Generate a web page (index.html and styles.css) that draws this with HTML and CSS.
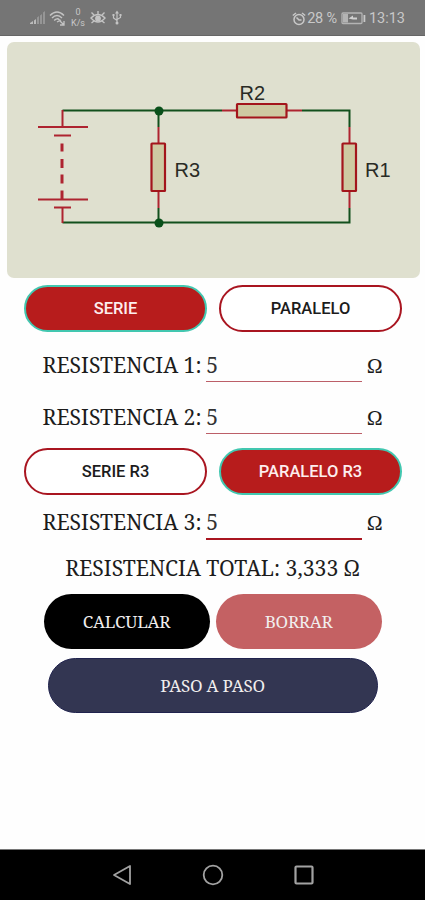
FILE: index.html
```html
<!DOCTYPE html>
<html lang="es">

<head>
    <meta charset="UTF-8">
    <meta name="viewport" content="width=device-width, initial-scale=1.0">
    <title>Resistencia total</title>
    <link rel="stylesheet" href="styles.css">
</head>

<body>
    <header class="status-bar">
        <div class="status-left">
            <svg class="icon-signal" width="16" height="14" viewBox="0 0 16 14">
                <path d="M0 13h3v-3l-3 2zM4 13h2V8L4 9.500z" fill="#bbb" />
                <path d="M7 13h2V5L7 6.500zM10 13h2V3l-2 1.500zM13 13h2V0l-2 1.500z" fill="#969696" />
            </svg>
            <svg width="17" height="16" viewBox="0 0 17 16" fill="none" stroke="#c4c4c4" stroke-width="1.500">
                <path d="M1 5.500Q8 -1.500 15 5.500M3 8Q8 3 13 8M5.200 10.500Q8 7.500 10.500 10" />
                <path d="M8 12l4-2M11 11l4 4M15 11v4h-4" stroke-width="1.300" />
            </svg>
            <div class="net-speed"><span>0</span><span>K/s</span></div>
            <svg width="16" height="14" viewBox="0 0 16 14" fill="none" stroke="#c4c4c4" stroke-width="1.400">
                <path d="M1 7Q8 0 15 7Q8 15 1 7zM1.500 1.500L4 4M8 0v3M14.500 1.500L12 4M1.500 12L4 10M14.500 12L12 10" />
                <circle cx="8" cy="7.500" r="2.200" fill="#c4c4c4" />
            </svg>
            <svg class="icon-usb" width="10" height="15" viewBox="0 0 10 15" fill="none" stroke="#c4c4c4" stroke-width="1.200">
                <path d="M5 2v11M1.500 5v3L5 10.500M8.500 5v2.500L5 9.500" />
                <path d="M3 3.500L5 .5l2 3zM.5 4h2v2h-2zM7.500 4h2v2h-2z" fill="#c4c4c4" stroke="none" />
                <circle cx="5" cy="13" r="1.500" fill="#c4c4c4" stroke="none" />
            </svg>
        </div>
        <div class="status-right">
            <svg width="14" height="14" viewBox="0 0 14 14" fill="none" stroke="#c8c8c8" stroke-width="1.500">
                <circle cx="7" cy="7.500" r="5" />
                <path d="M.8 3.500L4 1M10 1l3.200 2.500M4.500 5.500L7 8h2.500" />
            </svg>
            <span class="percent">28 %</span>
            <svg class="icon-battery" width="25" height="13" viewBox="0 0 25 13">
                <rect x="1" y="1" width="20" height="10.500" rx="1" fill="none" stroke="#b4b4b4" stroke-width="1.300" />
                <path d="M2 2h5v8.500H2z" fill="#b4b4b4" />
                <path d="M7.500 6.500L12 3.500v2h4v2h-4z" fill="#d0d0d0" />
                <path d="M22.500 3h1.800v7h-1.800z" fill="#c8c8c8" />
            </svg>
            <span>13:13</span>
        </div>
    </header>

    <main class="content">
        <div class="circuit">
            <svg width="413" height="236" viewBox="7 42 413 236" fill="none" stroke-width="2">
                <g class="wire">
                    <path d="M62.500 110.500H222M302 110.500H349.500V127M349.500 208V222.500H62.500M158.500 110V127M158.500 208V222" />
                </g>
                <g class="lead">
                    <path d="M222 110.500H237M287 110.500H302M349.500 127V143M349.500 191V208M158.500 127V143M158.500 191V208" />
                    <path d="M62.500 110V127M38 127H88M54 135.500H71M38 199.500H88M54 207.500H71M62.500 208V223" />
                    <path d="M62 143.500v8M62 159v9M62 174.500v9M62 190.500v9" stroke-width="3" />
                </g>
                <g class="resistor">
                    <rect x="237" y="104" width="49.500" height="13.500" rx=".5" />
                    <rect x="151.500" y="143.500" width="13.500" height="47.500" rx=".5" />
                    <rect x="342.500" y="143.500" width="13.500" height="47.500" rx=".5" />
                </g>
                <circle class="node" cx="159" cy="111" r="4.500" />
                <circle class="node" cx="159" cy="223" r="4.500" />
                <g class="labels">
                    <text x="239.500" y="100">R2</text>
                    <text x="174.500" y="177">R3</text>
                    <text x="365" y="177">R1</text>
                </g>
            </svg>
        </div>

        <div class="toggle-row">
            <button class="toggle active">SERIE</button>
            <button class="toggle">PARALELO</button>
        </div>

        <div class="field field-1">
            <label>RESISTENCIA 1:</label>
            <div class="input">5</div>
            <span class="unit">Ω</span>
        </div>
        <div class="field field-2">
            <label>RESISTENCIA 2:</label>
            <div class="input">5</div>
            <span class="unit">Ω</span>
        </div>

        <div class="toggle-row">
            <button class="toggle">SERIE R3</button>
            <button class="toggle active">PARALELO R3</button>
        </div>

        <div class="field field-3">
            <label>RESISTENCIA 3:</label>
            <div class="input focused">5</div>
            <span class="unit">Ω</span>
        </div>

        <div class="total">RESISTENCIA TOTAL: 3,333 Ω</div>

        <div class="actions">
            <button class="action calculate">CALCULAR</button>
            <button class="action clear">BORRAR</button>
        </div>
        <button class="action steps">PASO A PASO</button>
    </main>

    <nav class="nav-bar">
        <svg width="20" height="22" viewBox="0 0 20 22"><path d="M18 2v18L2 11z" /></svg>
        <svg width="22" height="22" viewBox="0 0 22 22"><circle cx="11" cy="11" r="9.300" /></svg>
        <svg width="20" height="22" viewBox="0 0 20 22"><rect x="1.500" y="2.500" width="17" height="17" rx="1" stroke-width="2.200" /></svg>
    </nav>
</body>

</html>
```
FILE: styles.css
```css
:root {
    --red: #b71c1c;
    --dark-red: #a91520;
    --teal: #42c7b0;
    --serif: "Noto Serif", "DejaVu Serif Condensed", "DejaVu Serif", serif;
}

* {
    margin: 0;
    padding: 0;
    box-sizing: border-box;
}

body {
    width: 425px;
    height: 900px;
    display: flex;
    flex-direction: column;
    background-color: #fefefe;
    color: #1c1c1c;
    font-family: Roboto, sans-serif;
    overflow: hidden;
}

.status-bar {
    height: 36px;
    padding: 0 20px 0 30px;
    display: flex;
    justify-content: space-between;
    align-items: center;
    background-color: #757575;
    border-bottom: 1px solid #666;
    color: #c8c8c8;
}

.status-left,
.status-right {
    display: flex;
    align-items: center;
}

.status-left {
    gap: 3px;
}

.icon-usb {
    margin-left: 3px;
}

.net-speed {
    width: 18px;
    display: flex;
    flex-direction: column;
    align-items: center;
    font-size: 9px;
    line-height: 11px;
}

.status-right {
    padding-top: 2px;
    font-size: 14.500px;
}

.percent {
    margin-left: 1px;
    letter-spacing: -0.200px;
}

.icon-battery {
    margin: 0 3px 0 4px;
}

.content {
    flex: 1;
    display: flex;
    flex-direction: column;
    align-items: center;
    padding-top: 6px;
}

.circuit {
    align-self: flex-end;
    width: 413px;
    height: 236px;
    margin: 0 5px 7px 0;
    background-color: #dfe0cf;
    border-radius: 7px;
    overflow: hidden;
}

.circuit svg {
    display: block;
}

.wire {
    stroke: #12501d;
}

.lead {
    stroke: #ae2430;
}

.resistor {
    fill: #cecaa2;
    stroke: #a3151b;
    stroke-width: 2.200px;
}

.node {
    fill: #09501a;
}

.labels {
    fill: #292b25;
    font-family: "Liberation Sans", Arial, sans-serif;
    font-size: 20px;
}

.toggle-row {
    display: flex;
    gap: 12px;
}

.toggle {
    width: 183px;
    height: 47px;
    padding-left: 1px;
    border: 2px solid var(--dark-red);
    border-radius: 24px;
    background-color: #fff;
    color: #1c1c1c;
    font-family: Roboto, sans-serif;
    font-size: 16.500px;
    font-weight: 500;
}

.toggle.active {
    background-color: var(--red);
    border-color: var(--teal);
    color: #fdeeee;
}

.field {
    width: 340px;
    display: flex;
    align-items: flex-start;
    font-family: var(--serif);
    font-size: 21.200px;
    line-height: 32px;
}

.field label {
    width: 164px;
    white-space: nowrap;
}

.input {
    width: 156px;
    height: 33px;
    border-bottom: 1px solid #bc5f68;
    color: #333;
}

.input.focused {
    height: 34px;
    border-bottom: 2px solid var(--dark-red);
}

.unit {
    margin-left: 5px;
    font-size: 20.500px;
}

.field-1 {
    height: 52px;
    margin-top: 17px;
}

.field-2 {
    height: 47px;
}

.field-3 {
    height: 45px;
    margin-top: 11px;
}

.total {
    height: 43px;
    font-family: var(--serif);
    font-size: 21.200px;
    line-height: 34px;
    white-space: nowrap;
}

.actions {
    display: flex;
    gap: 6px;
    margin-bottom: 9px;
}

.action {
    width: 166px;
    height: 55px;
    border: none;
    border-radius: 28px;
    color: #f1eeee;
    font-family: var(--serif);
    font-size: 17px;
    letter-spacing: -0.250px;
}

.calculate {
    background-color: #000;
}

.clear {
    background-color: #c46163;
}

.steps {
    width: 330px;
    border: 1px solid #20234e;
    background-color: #333652;
}

.nav-bar {
    height: 51px;
    display: flex;
    justify-content: center;
    align-items: center;
    gap: 70px;
    background-color: #000;
    border-top: 1px solid #777;
}

.nav-bar svg {
    fill: none;
    stroke: #a2a2a2;
    stroke-width: 1.800px;
    stroke-linejoin: round;
}
```
